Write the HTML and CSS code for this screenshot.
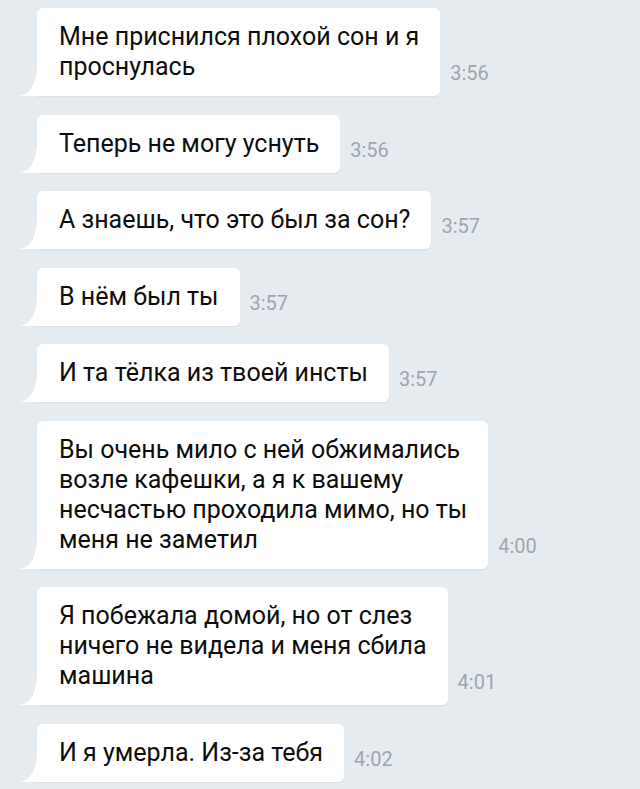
FILE: index.html
```html
<!DOCTYPE html>
<html lang="ru">
<head>
	<meta charset="utf-8">
	<title>Диалог</title>
	<link rel="stylesheet" href="styles.css">
</head>
<body>
	<div class="chat">
		<div class="msg">
			<div class="bubble">Мне приснился плохой сон и я<br>проснулась</div>
			<span class="time">3:56</span>
		</div>
		<div class="msg">
			<div class="bubble">Теперь не могу уснуть</div>
			<span class="time">3:56</span>
		</div>
		<div class="msg">
			<div class="bubble">А знаешь, что это был за сон?</div>
			<span class="time">3:57</span>
		</div>
		<div class="msg">
			<div class="bubble">В нём был ты</div>
			<span class="time">3:57</span>
		</div>
		<div class="msg">
			<div class="bubble">И та тёлка из твоей инсты</div>
			<span class="time">3:57</span>
		</div>
		<div class="msg">
			<div class="bubble">Вы очень мило с ней обжимались<br>возле кафешки, а я к вашему<br>несчастью проходила мимо, но ты<br>меня не заметил</div>
			<span class="time">4:00</span>
		</div>
		<div class="msg">
			<div class="bubble">Я побежала домой, но от слез<br>ничего не видела и меня сбила<br>машина</div>
			<span class="time">4:01</span>
		</div>
		<div class="msg">
			<div class="bubble">И я умерла. Из-за тебя</div>
			<span class="time">4:02</span>
		</div>
	</div>
</body>
</html>
```

FILE: styles.css
```css
html, body {
	margin: 0;
	padding: 0;
	height: 100%;
}
body {
	background: #e6ebf0;
	font-family: Roboto, "Noto Sans", "DejaVu Sans", sans-serif;
}
.chat {
	display: flex;
	flex-direction: column;
	gap: 18.5px;
	padding: 8px 0 0 37px;
}
.msg {
	display: flex;
	align-items: flex-end;
}
.bubble {
	position: relative;
	background: #fff;
	color: #0d0d0d;
	font-size: 25px;
	line-height: 30px;
	padding: 14px 21px 14px 22px;
	border-radius: 6px 6px 6px 0;
	white-space: nowrap;
	box-shadow: 0 1px 1px rgba(120, 135, 150, 0.12);
}
/* tail at the bottom left */
.bubble::before {
	content: "";
	position: absolute;
	left: -17px;
	bottom: 0;
	width: 17px;
	height: 28px;
	background: radial-gradient(ellipse 17px 28px at 0 0, transparent 97%, #fff 100%);
}
.time {
	margin: 0 0 13px 10px;
	font-size: 20px;
	line-height: 20px;
	color: #9ea6af;
}
```
